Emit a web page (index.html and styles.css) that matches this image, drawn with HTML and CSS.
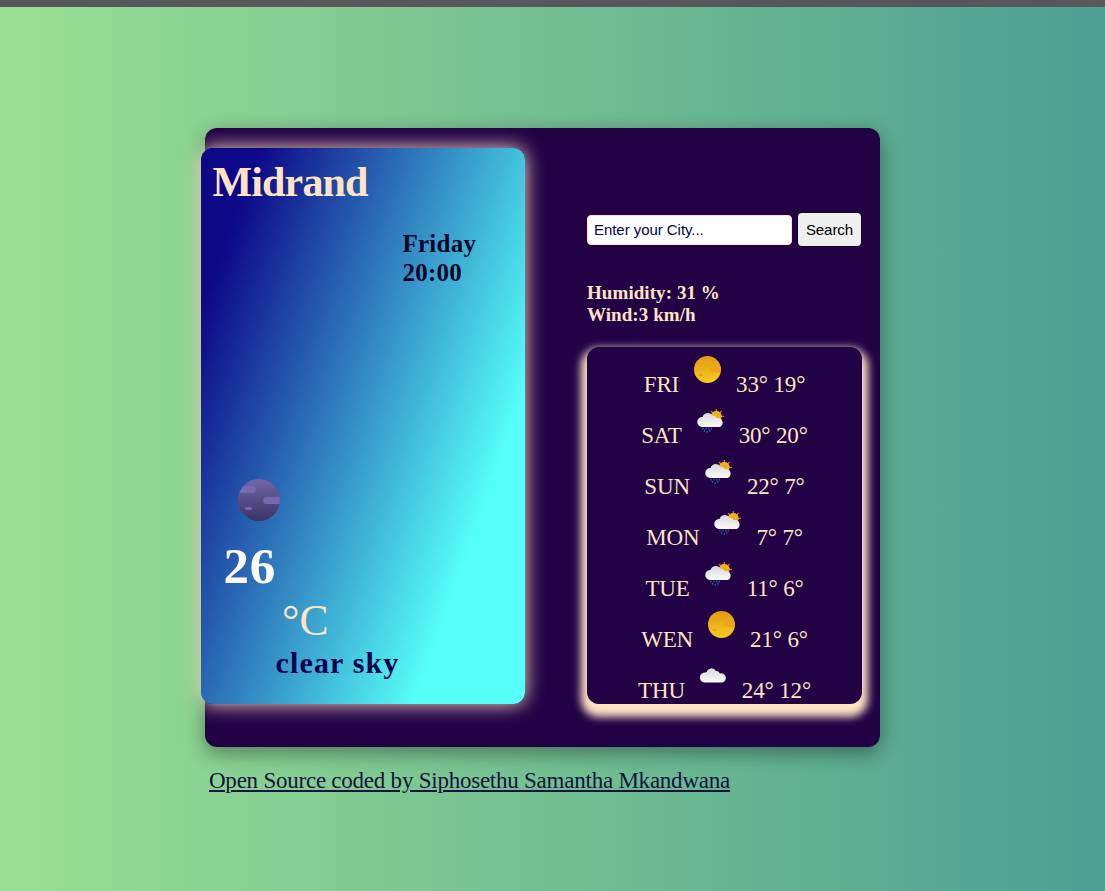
FILE: index.html
```html
<!DOCTYPE html>
<html lang="en">
<head>
<meta charset="utf-8">
<title>Weather</title>
<link rel="stylesheet" href="styles.css">
</head>
<body>
<svg class="defs" width="0" height="0" aria-hidden="true">
  <defs>
    <linearGradient id="gold" x1="0" y1="0" x2="0" y2="1"><stop offset="0" stop-color="#dd9a14"/><stop offset="1" stop-color="#fdca20"/></linearGradient>
    <linearGradient id="dusk" x1="0" y1="0" x2="0" y2="1"><stop offset="0" stop-color="#7266a8"/><stop offset="1" stop-color="#3b3365"/></linearGradient>
    <linearGradient id="white" x1="0" y1="0" x2="0" y2="1"><stop offset="0" stop-color="#d8d8d8"/><stop offset="1" stop-color="#fbfbfb"/></linearGradient>
    <clipPath id="disc"><circle cx="21" cy="21" r="21"/></clipPath>
    <symbol id="sun" viewBox="0 0 42 42"><g clip-path="url(#disc)"><path fill="url(#gold)" d="M0 0h42v42H0z"/><path fill="#f0a318" d="M0 7h14.500a3.500 3.500 0 0 1 0 7H0zM42 18H28.700a3.500 3.500 0 0 0 0 7H42z"/><rect x="7" y="28" width="7" height="3" rx="1.500" fill="#f0a318"/></g></symbol>
    <symbol id="moon" viewBox="0 0 42 42"><g clip-path="url(#disc)"><path fill="url(#dusk)" d="M0 0h42v42H0z"/><path fill="#756aae" d="M0 7h14.500a3.500 3.500 0 0 1 0 7H0zM42 18H28.700a3.500 3.500 0 0 0 0 7H42z"/><rect x="7" y="28" width="7" height="3" rx="1.500" fill="#756aae"/></g></symbol>
    <symbol id="cloud" viewBox="0 0 27 27"><path fill="url(#white)" d="M5 20.500a5 5 0 0 1-.300-10 6 6 0 0 1 2-.200A5 5 0 0 1 16 9a3.200 3.200 0 0 1 3.700 2.500 4.600 4.600 0 1 1 2.800 9z"/></symbol>
    <symbol id="rain" viewBox="0 0 27 27">
      <path stroke="#bd7f2b" stroke-width="1.200" d="M19.300 2v14M12.500 9.300h14.500M14 4l10.600 10.600M24.600 4 14 14.600"/>
      <circle cx="19.300" cy="9.300" r="5.500" fill="#edb021"/>
      <path fill="url(#white)" d="M5 20A5 5 0 0 1 5.500 10 5.600 5.600 0 0 1 15.700 8.800a3.500 3.500 0 0 1 4 2.500 4.500 4.500 0 1 1 2.800 8.700z"/>
      <path stroke="#24559f" stroke-width="1.500" stroke-linecap="round" d="M6 21.300v.7M9 21.300v.7M11.800 21.300v.7M14.300 21.300v.7M7.500 23.500v.7M12.800 23.500v.7M10.200 24.500v.7"/>
    </symbol>
  </defs>
</svg>
<div class="topbar"></div>
<main class="page">
  <div class="container">
    <section class="today">
      <h1 class="city">Midrand</h1>
      <div class="date">Friday<br>20:00</div>
      <svg class="now-icon"><use href="#moon"/></svg>
      <div class="temp">26</div>
      <div class="unit">°C</div>
      <div class="description">clear sky</div>
    </section>
    <section class="details">
      <form class="search"><input class="field" type="text" placeholder="Enter your City..."><button class="button" type="button">Search</button></form>
      <div class="stats">Humidity: 31 %<br>Wind:3 km/h</div>
      <div class="forecast">
        <div class="day"><span>FRI</span><svg class="icon"><use href="#sun"/></svg><span>33° 19°</span></div>
        <div class="day"><span>SAT</span><svg class="icon"><use href="#rain"/></svg><span>30° 20°</span></div>
        <div class="day"><span>SUN</span><svg class="icon"><use href="#rain"/></svg><span>22° 7°</span></div>
        <div class="day"><span>MON</span><svg class="icon"><use href="#rain"/></svg><span>7° 7°</span></div>
        <div class="day"><span>TUE</span><svg class="icon"><use href="#rain"/></svg><span>11° 6°</span></div>
        <div class="day"><span>WEN</span><svg class="icon"><use href="#sun"/></svg><span>21° 6°</span></div>
        <div class="day"><span>THU</span><svg class="icon"><use href="#cloud"/></svg><span>24° 12°</span></div>
      </div>
    </section>
  </div>
  <a class="credit" href="#">Open Source coded by Siphosethu Samantha Mkandwana</a>
</main>
</body>
</html>
```
FILE: styles.css
```css
* { box-sizing: border-box; }
body {
  margin: 0;
  height: 891px;
  overflow: hidden;
  font-family: "Liberation Serif", "Times New Roman", serif;
  background: linear-gradient(90deg, #99df92 0%, #4d9f93 100%);
}
.defs { display: block; }
.topbar { height: 7px; background: #57585c; }
.page { padding: 121px 0 0 205px; }
.container {
  display: flex;
  align-items: flex-start;
  width: 675px;
  height: 619px;
  padding-top: 20px;
  border-radius: 12px;
  background: #220145;
  box-shadow: 0 6px 20px rgba(0, 0, 0, 0.4);
}
.today {
  width: 324.5px;
  height: 556px;
  margin-left: -4.5px;
  padding: 10px 12px;
  border-radius: 12px;
  background: linear-gradient(109.6deg, rgb(13, 8, 136) 11.2%, rgb(86, 255, 248) 78.8%);
  box-shadow: 0 0 20px bisque;
}
.city { margin: 0; font-size: 42px; line-height: 49px; letter-spacing: -0.85px; color: bisque; }
.date {
  margin: 22px 0 0 190px;
  font-size: 25px;
  font-weight: bold;
  line-height: 29px;
  letter-spacing: 0.25px;
  color: #07072b;
}
.now-icon { display: block; width: 42px; height: 42px; margin: 192px 0 0 25.5px; }
.temp { margin: 16px 0 0 11px; font-size: 51px; line-height: 58px; font-weight: bold; letter-spacing: 0.8px; color: snow; }
.unit { margin: 0 0 0 69.5px; font-size: 43.5px; line-height: 50px; color: bisque; }
.description { margin: 0 0 0 63px; font-size: 30px; line-height: 36px; font-weight: bold; letter-spacing: 1.15px; color: #03034f; }
.details { width: 275px; margin: 65px 0 0 62px; }
.search { display: flex; gap: 6px; height: 34px; }
.field {
  width: 205px;
  height: 30px;
  margin-top: 2px;
  padding: 0 6px 1px;
  border: 1px solid bisque;
  border-radius: 4px;
  font: 15px "Liberation Sans", Arial, sans-serif;
  letter-spacing: -0.05px;
}
.field::placeholder { color: #03034f; }
.button {
  width: 63px;
  height: 33px;
  padding: 0;
  border: 0;
  border-radius: 4px;
  background: #efefef;
  box-shadow: 0 0 0 1px #0d0518;
  font: 15px "Liberation Sans", Arial, sans-serif;
  letter-spacing: -0.05px;
  color: #000;
}
.stats { margin-top: 35px; font-size: 19px; font-weight: bold; line-height: 22px; letter-spacing: 0.07px; color: bisque; }
.forecast {
  height: 357px;
  margin-top: 21px;
  border-radius: 12px;
  font-size: 23px;
  letter-spacing: -0.15px;
  color: bisque;
  box-shadow: 0 7px 8px 6px bisque;
}
.day { display: flex; justify-content: center; height: 51px; line-height: 26px; padding-top: 25px; }
.icon { width: 27px; height: 27px; margin: -16px 15px 0 15px; }
.credit { display: inline-block; margin: 20px 0 0 4px; font-size: 23px; line-height: 27px; letter-spacing: -0.235px; color: #13133c; }
```
